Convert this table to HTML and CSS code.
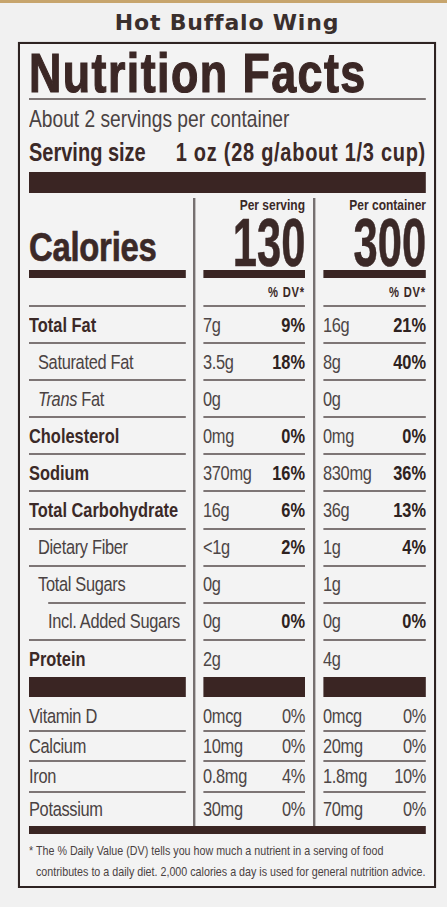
FILE: index.html
```html
<!DOCTYPE html>
<html lang="en">
<head>
  <meta charset="UTF-8" />
  <meta name="viewport" content="width=device-width, initial-scale=1.0"/>
  <title>Hot Buffalo Wing - Nutrition Facts</title>
  <link rel="stylesheet" href="styles.css">
</head>
<body>

<div class="top-strip"></div>
<h1 class="flavor">Hot Buffalo Wing</h1>

<section class="label">
  <div class="label-inner">
    <h2 class="facts-title">Nutrition Facts</h2>
    <p class="servings">About 2 servings per container</p>
    <p class="serving-size"><span>Serving size</span><span class="size-value">1 oz (28 g/about 1/3 cup)</span></p>
    <div class="bar bar-lg"></div>

    <div class="grid">
      <div class="divider d1"></div>
      <div class="divider d2"></div>

      <!-- Calories -->
      <div class="cell cal cal-label">Calories</div>
      <div class="cell cal"><span class="per">Per serving</span><span class="kcal">130</span></div>
      <div class="cell cal"><span class="per">Per container</span><span class="kcal">300</span></div>

      <div class="cell dv"></div>
      <div class="cell dv">% DV*</div>
      <div class="cell dv">% DV*</div>

      <!-- Nutrients -->
      <div class="cell lbl">Total Fat</div>
      <div class="cell amt"><span>7g</span><b>9%</b></div>
      <div class="cell amt"><span>16g</span><b>21%</b></div>

      <div class="cell lbl sub">Saturated Fat</div>
      <div class="cell amt"><span>3.5g</span><b>18%</b></div>
      <div class="cell amt"><span>8g</span><b>40%</b></div>

      <div class="cell lbl sub"><i>Trans</i>&nbsp;Fat</div>
      <div class="cell amt"><span>0g</span></div>
      <div class="cell amt"><span>0g</span></div>

      <div class="cell lbl">Cholesterol</div>
      <div class="cell amt"><span>0mg</span><b>0%</b></div>
      <div class="cell amt"><span>0mg</span><b>0%</b></div>

      <div class="cell lbl">Sodium</div>
      <div class="cell amt"><span>370mg</span><b>16%</b></div>
      <div class="cell amt"><span>830mg</span><b>36%</b></div>

      <div class="cell lbl">Total Carbohydrate</div>
      <div class="cell amt"><span>16g</span><b>6%</b></div>
      <div class="cell amt"><span>36g</span><b>13%</b></div>

      <div class="cell lbl sub">Dietary Fiber</div>
      <div class="cell amt"><span>&lt;1g</span><b>2%</b></div>
      <div class="cell amt"><span>1g</span><b>4%</b></div>

      <div class="cell lbl sub sugars"><span>Total Sugars</span></div>
      <div class="cell amt"><span>0g</span></div>
      <div class="cell amt"><span>1g</span></div>

      <div class="cell lbl sub2">Incl. Added Sugars</div>
      <div class="cell amt"><span>0g</span><b>0%</b></div>
      <div class="cell amt"><span>0g</span><b>0%</b></div>

      <div class="cell lbl no-line">Protein</div>
      <div class="cell amt no-line"><span>2g</span></div>
      <div class="cell amt no-line"><span>4g</span></div>

      <div class="cell fill"></div>
      <div class="cell fill"></div>
      <div class="cell fill"></div>

      <!-- Vitamins & minerals -->
      <div class="cell vit first">Vitamin D</div>
      <div class="cell amt vit first"><span>0mcg</span><span>0%</span></div>
      <div class="cell amt vit first"><span>0mcg</span><span>0%</span></div>

      <div class="cell vit">Calcium</div>
      <div class="cell amt vit"><span>10mg</span><span>0%</span></div>
      <div class="cell amt vit"><span>20mg</span><span>0%</span></div>

      <div class="cell vit">Iron</div>
      <div class="cell amt vit"><span>0.8mg</span><span>4%</span></div>
      <div class="cell amt vit"><span>1.8mg</span><span>10%</span></div>

      <div class="cell vit no-line">Potassium</div>
      <div class="cell amt vit no-line"><span>30mg</span><span>0%</span></div>
      <div class="cell amt vit no-line"><span>70mg</span><span>0%</span></div>
    </div>

    <div class="bar bar-md"></div>
    <p class="footnote">* The % Daily Value (DV) tells you how much a nutrient in a serving of food<br>contributes to a daily diet. 2,000 calories a day is used for general nutrition advice.</p>
  </div>
</section>

</body>
</html>
```

FILE: styles.css
```css
body {
  margin: 0;
  background: #f1f1f1;
  font-family: "Liberation Sans", Arial, sans-serif;
  color: #3b2927;
}

.top-strip {
  height: 3px;
  background: #c7a56d;
}

.flavor {
  margin: 0 0 0 18px;
  width: 418px;
  height: 39px;
  font: 700 22px/39px "DejaVu Sans", sans-serif;
  letter-spacing: 0.8px;
  text-align: center;
  color: #3a2f2d;
}

/* outer label box */
.label {
  box-sizing: border-box;
  width: 418px;
  margin-left: 18px;
  padding: 0 8px 4px 9px;
  border: 2px solid #2e2322;
  background: #f3f3f3;
  box-shadow: 0 0 1px rgba(0, 0, 0, 0.35);
}

/* the label type is condensed: lay out wide, squeeze horizontally */
.label-inner {
  width: 496.25px;
  transform: scaleX(0.8);
  transform-origin: 0 0;
}

.facts-title {
  margin: 0;
  padding-top: 4px;
  font-size: 56px;
  line-height: 50px;
  font-weight: 700;
  letter-spacing: 1.8px;
  color: #3b2725;
  -webkit-text-stroke: 1.2px #3b2725;
  border-bottom: 2px solid #7d7575;
}

.servings {
  margin: 0;
  padding-top: 2px;
  font-size: 24px;
  line-height: 33px;
  color: #4a4242;
}

.serving-size {
  margin: 0;
  display: flex;
  justify-content: space-between;
  font-size: 25px;
  line-height: 34px;
  font-weight: 700;
}

.size-value {
  letter-spacing: 0.9px;
}

.bar {
  background: #3a2523;
}

.bar-lg {
  margin-top: 3px;
  height: 21px;
}

.bar-md {
  height: 8px;
}

.grid {
  display: grid;
  grid-template-columns: 196.25px 21.25px 127.5px 22.5px 128.75px;
  grid-template-rows: 85px 29px repeat(9, 37.1px) 36px 20px 35px 30px 31px 33px;
}

.divider {
  grid-row: 1 / -1;
  width: 2.5px;
  margin-top: 5px;
  background: #767070;
}

.d1 {
  grid-column: 2;
  margin-left: 8.75px;
}

.d2 {
  grid-column: 4;
  margin-left: 10px;
}

.cell {
  display: flex;
  align-items: center;
  border-bottom: 2px solid #7d7575;
  font-size: 20.5px;
  white-space: nowrap;
}

.cal {
  flex-direction: column;
  justify-content: flex-end;
  align-items: flex-end;
  border-bottom: 8px solid #3a2523;
  font-weight: 700;
}

.cal-label {
  align-items: flex-start;
  font-size: 41px;
  line-height: 46px;
  letter-spacing: -0.3px;
  -webkit-text-stroke: 0.7px #3b2927;
}

.per {
  font-size: 15px;
  line-height: 20px;
}

.kcal {
  display: block;
  font-size: 68px;
  line-height: 55px;
  transform: scaleX(0.8);
  transform-origin: right center;
  -webkit-text-stroke: 0.6px #3b2927;
}

.dv {
  justify-content: flex-end;
  font-size: 14px;
  font-weight: 700;
  letter-spacing: 1px;
}

.lbl {
  font-weight: 700;
}

.sub,
.sub2 {
  font-weight: 400;
  color: #4a4242;
  letter-spacing: -0.4px;
}

.sub {
  padding-left: 11.25px;
}

.sub2 {
  padding-left: 23.75px;
}

.sugars {
  margin-left: 23.75px;
  padding-left: 0;
}

.sugars span {
  margin-left: -12.5px;
}

.amt {
  justify-content: space-between;
}

.amt span {
  color: #4d4646;
  letter-spacing: -0.4px;
}

.amt b {
  color: #2e2220;
}

.no-line {
  border-bottom: none;
}

.fill {
  border-bottom: none;
  background: #3a2523;
}

.vit {
  color: #4a4242;
  letter-spacing: -0.4px;
}

.vit.first {
  padding-top: 5px;
}

.footnote {
  margin: 6px 0 0;
  padding-left: 8.75px;
  text-indent: -8.75px;
  font-size: 13.4px;
  line-height: 21px;
  white-space: nowrap;
  color: #4a4242;
}
```
